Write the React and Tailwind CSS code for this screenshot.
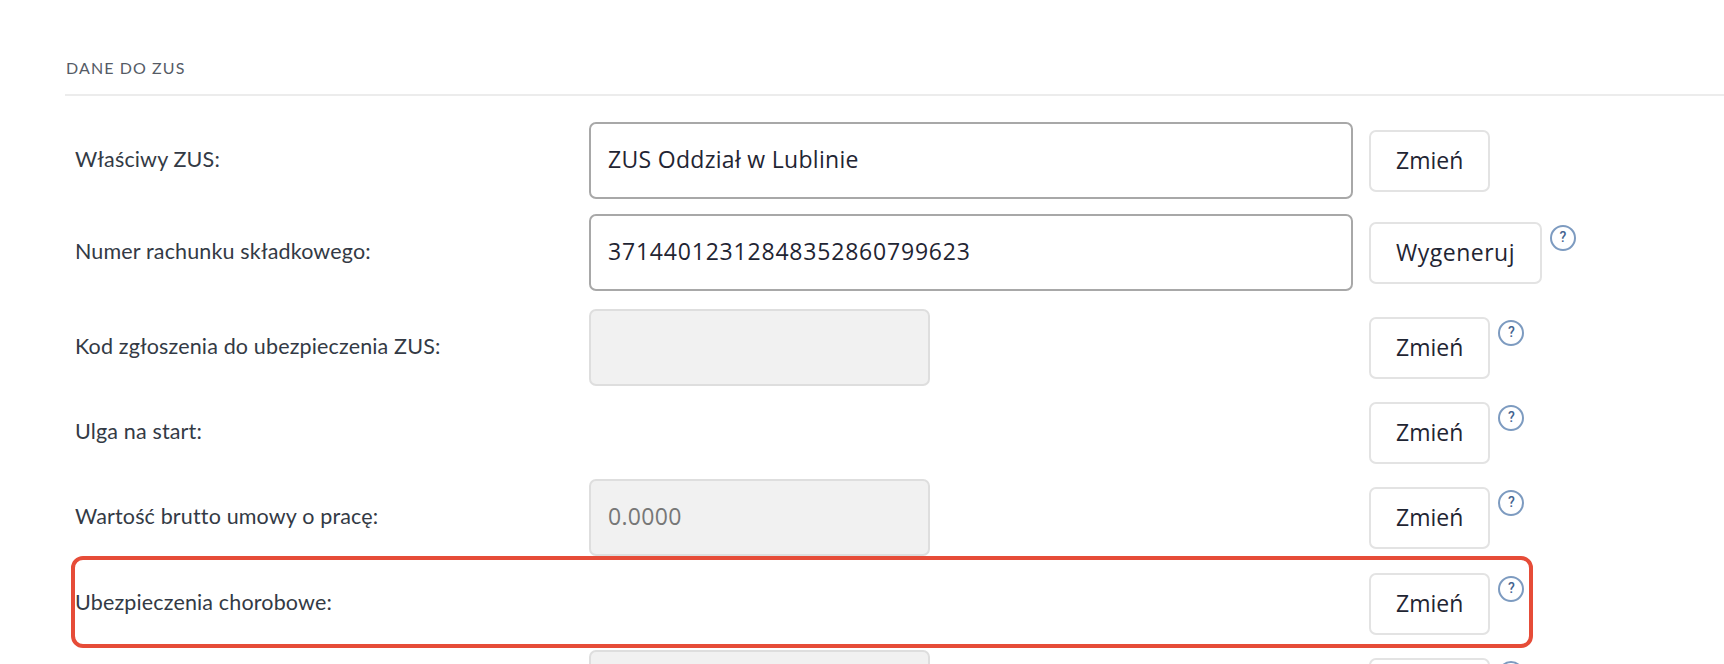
const labelFont = "font-['Lato',sans-serif]";

function HelpIcon({ mark = "?" }) {
  return (
    <span className="mt-[3px] flex h-[26px] w-[26px] shrink-0 items-center justify-center rounded-full border-2 border-[#7d9bc0] font-['Roboto',sans-serif] text-[14px] font-medium text-[#44638f]">
      {mark}
    </span>
  );
}

function ActionButton({ children = "Zmień", help = true, className = "" }) {
  return (
    <div className="flex items-start gap-2">
      <button className={`h-[62px] min-w-[121px] rounded-[7px] border-2 border-[#e3e3e3] bg-white px-[25px] font-['Open_Sans',sans-serif] text-[23px] font-medium text-[#1f2533] ${className}`}>
        {children}
      </button>
      {help && <HelpIcon />}
    </div>
  );
}

function TextField({ value, className = "" }) {
  return (
    <div className={`flex h-[77px] w-[764px] items-center rounded-[7px] border-2 border-[#a8a8a8] bg-white px-[17px] pb-[2px] font-['Open_Sans',sans-serif] text-[23px] font-medium text-[#1f2533] ${className}`}>
      {value}
    </div>
  );
}

function DisabledField({ value }) {
  return (
    <div className="flex h-[77px] w-[341px] items-center rounded-[7px] border-2 border-[#dedede] bg-[#f1f1f1] px-[17px] pb-[2px] font-['Open_Sans',sans-serif] text-[23px] tracking-[0.3px] text-[#777777]">
      {value}
    </div>
  );
}

function Row({ label, field, action, className = "" }) {
  return (
    <div className={`flex h-[77px] items-center ${className}`}>
      <div className={`w-[524px] shrink-0 pb-[2px] pl-[10px] text-[21.5px] tracking-[0.15px] text-[#333a45] ${labelFont}`}>
        {label}
      </div>
      <div className="w-[780px] shrink-0">{field}</div>
      {action}
    </div>
  );
}

export default function App() {
  return (
    <div className="relative h-screen overflow-hidden bg-white">
      <div className="pl-[65px] pt-[58px]">
        <h2 className={`border-b-2 border-[#ececec] pb-[16px] pl-px text-[16px] uppercase leading-[20px] tracking-[1.1px] text-[#555b66] ${labelFont}`}>
          Dane do ZUS
        </h2>

        <div className="mt-[26px] flex flex-col">
          <Row className="mb-[15px]" label="Właściwy ZUS:" field={<TextField value="ZUS Oddział w Lublinie" className="tracking-[0.3px]" />} action={<ActionButton help={false} />} />
          <Row className="mb-[18px]" label="Numer rachunku składkowego:" field={<TextField value="37144012312848352860799623" className="tracking-[0.8px]" />} action={<ActionButton className="tracking-[0.5px]">Wygeneruj</ActionButton>} />
          <Row className="mb-2" label="Kod zgłoszenia do ubezpieczenia ZUS:" field={<DisabledField />} action={<ActionButton />} />
          <Row className="mb-2" label="Ulga na start:" action={<ActionButton />} />
          <Row className="mb-[9px]" label="Wartość brutto umowy o pracę:" field={<DisabledField value="0.0000" />} action={<ActionButton />} />
          <Row className="mb-2" label="Ubezpieczenia chorobowe:" action={<ActionButton />} />
          {/* ostatni wiersz uciety przez dol okna */}
          <Row field={<DisabledField />} action={<div className="flex items-start gap-2"><div className="h-[62px] w-[121px] rounded-[7px] border-2 border-[#e3e3e3] bg-white" /><HelpIcon mark="" /></div>} />
        </div>
      </div>

      {/* czerwona ramka z adnotacji */}
      <div className="absolute left-[71px] top-[556px] h-[92px] w-[1462px] rounded-[12px] border-[4px] border-[#e64c38]" />
    </div>
  );
}
